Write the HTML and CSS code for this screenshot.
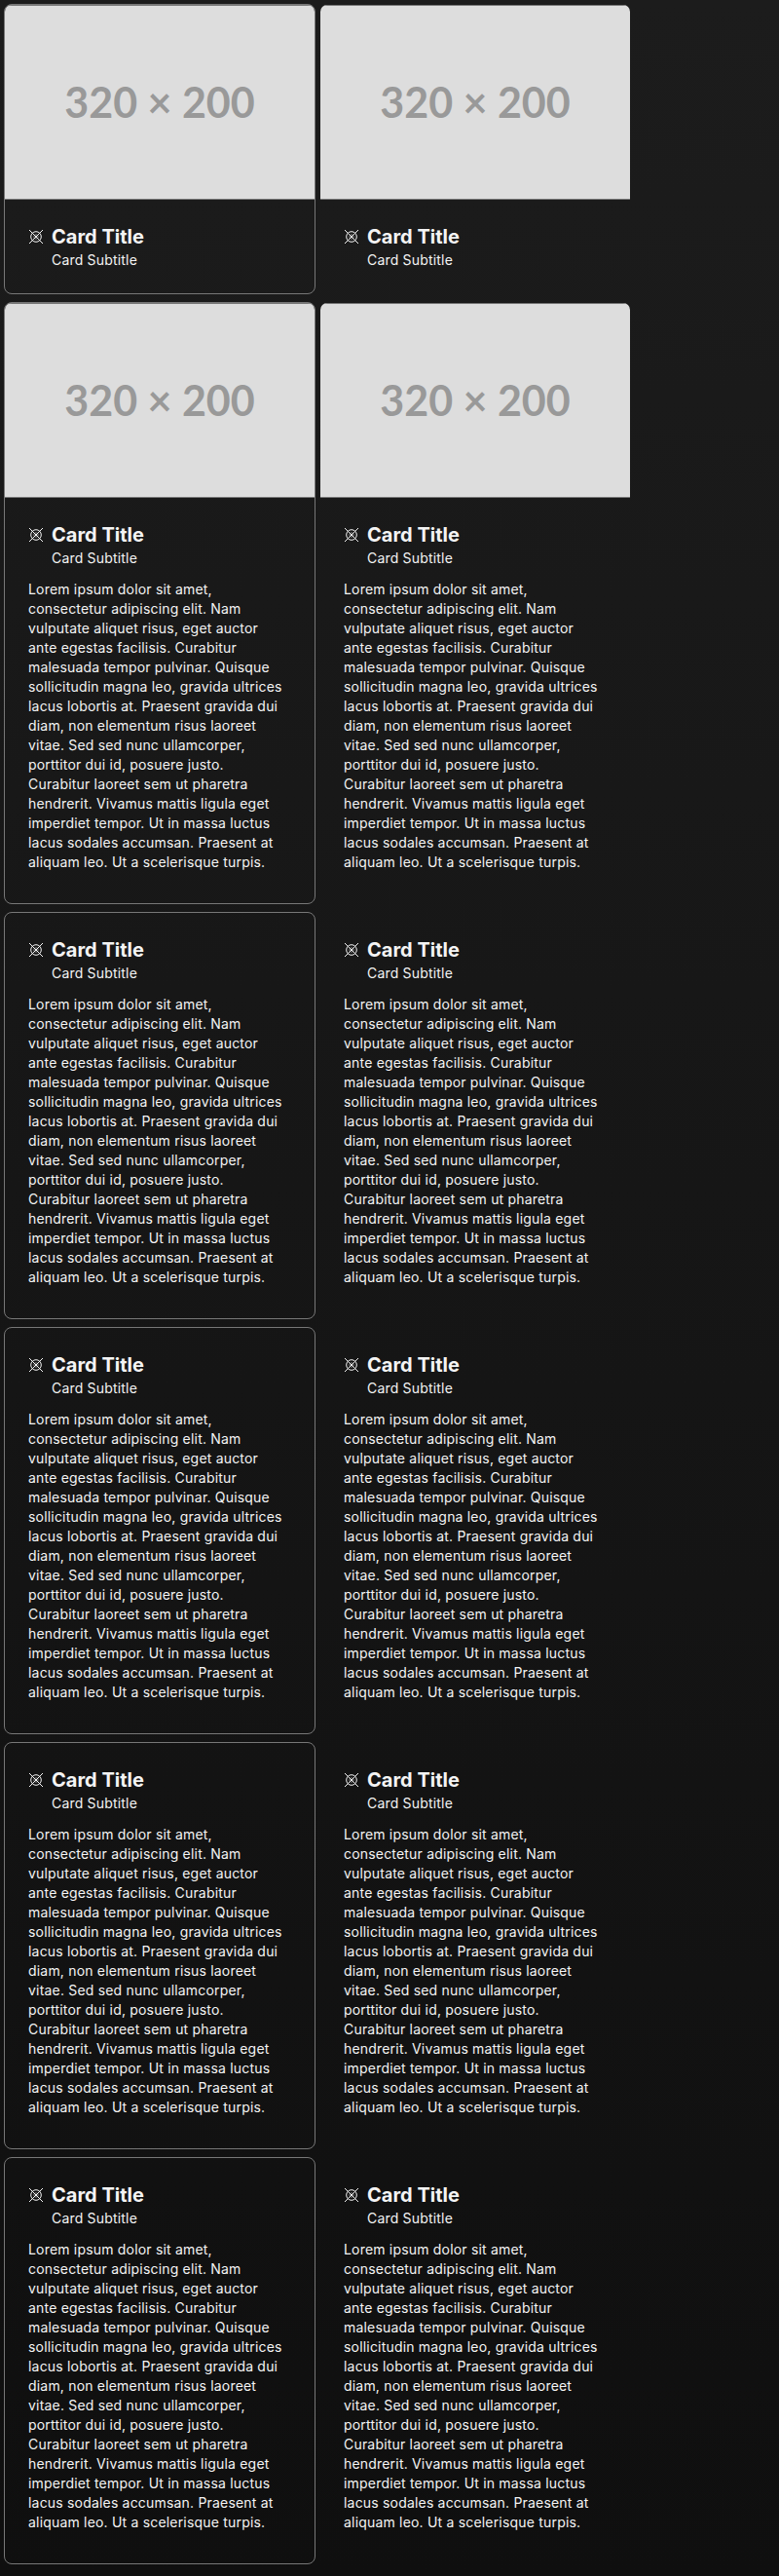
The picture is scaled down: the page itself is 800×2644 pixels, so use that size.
FILE: index.html
```
<!DOCTYPE html>
<html lang="en">
<head>
<meta charset="utf-8">
<title>Cards</title>
<link rel="stylesheet" href="styles.css">
</head>
<body>
<main class="cards" id="cards"></main>
<template id="card">
<article class="card">
<div class="media">320 × 200</div>
<div class="body">
<header class="head">
<svg class="icon" viewBox="0 0 16 16" fill="none" stroke="currentColor"><circle cx="8" cy="8" r="5.3"/><circle cx="8" cy="8" r="2.2" stroke-width=".5"/><path d="M1 1l14 14M15 1L1 15"/></svg>
<h2 class="title">Card Title</h2>
<p class="subtitle">Card Subtitle</p>
</header>
<p class="text">Lorem ipsum dolor sit amet, consectetur adipiscing elit. Nam vulputate aliquet risus, eget auctor ante egestas facilisis. Curabitur malesuada tempor pulvinar. Quisque sollicitudin magna leo, gravida ultrices lacus lobortis at. Praesent gravida dui diam, non elementum risus laoreet vitae. Sed sed nunc ullamcorper, porttitor dui id, posuere justo. Curabitur laoreet sem ut pharetra hendrerit. Vivamus mattis ligula eget imperdiet tempor. Ut in massa luctus lacus sodales accumsan. Praesent at aliquam leo. Ut a scelerisque turpis.</p>
</div>
</article>
</template>
<script src="cards.js"></script>
</body>
</html>
```

FILE: cards.js
```
const grid = document.getElementById('cards');
const template = document.getElementById('card');
const rows = [
  { media: true, text: false },
  { media: true, text: true },
  { media: false, text: true },
  { media: false, text: true },
  { media: false, text: true },
  { media: false, text: true }
];

for (const row of rows) {
  for (const outlined of [true, false]) {
    const card = template.content.firstElementChild.cloneNode(true);
    if (outlined) card.classList.add('outlined');
    if (!row.media) card.querySelector('.media').remove();
    if (!row.text) card.querySelector('.text').remove();
    grid.append(card);
  }
}
```

FILE: styles.css
```
* { box-sizing: border-box; }
html { background: #111; }
body {
  margin: 0;
  height: 2644px;
  background: linear-gradient(#1c1c1c, #0f0f0f);
  color: #f4f4f4;
  font: 400 14px/20px Inter, sans-serif;
  letter-spacing: 0.19px;
}
.cards {
  display: grid;
  grid-template-columns: 320px 320px;
  gap: 8px 4px;
  padding: 4px;
}
.card {
  border: 1px solid transparent;
  border-radius: 8px;
  overflow: hidden;
}
.outlined { border-color: #777; }
.media {
  display: flex;
  align-items: center;
  justify-content: center;
  height: 200px;
  padding-bottom: 2px;
  border: solid #777;
  border-width: 1px 0;
  background: #ddd;
  color: #999;
  font: 700 43px/1 Lato, sans-serif;
  letter-spacing: 0;
}
.body { padding: 24px 28px 24px 24px; }
.head {
  display: grid;
  grid-template-columns: 16px 1fr;
  column-gap: 8px;
  align-items: center;
}
.icon { width: 16px; height: 16px; }
.title { margin: 0; font-size: 20px; line-height: 28px; font-weight: 700; letter-spacing: 0; }
.subtitle { grid-column: 2; margin: 0; }
.text { margin: 12px 0 8px; }
```
